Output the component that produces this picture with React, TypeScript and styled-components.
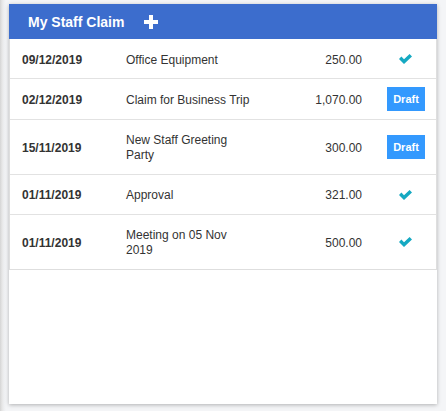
import React from "react";
import styled, { createGlobalStyle } from "styled-components";

const Global = createGlobalStyle`
  html, body { margin: 0; padding: 0; }
  body {
    width: 446px;
    height: 411px;
    overflow: hidden;
    font-family: "Liberation Sans", Arial, sans-serif;
    background: linear-gradient(to right, #d4d4d4 0px, #e6e6e6 2px, #eeeff1 4px, #f4f5f7 6px);
  }
`;

const Page = styled.div`
  padding: 4px 9px 7px 9px;
`;

const Card = styled.div`
  width: 428px;
  height: 400px;
  background: #fff;
  box-shadow: 0 1px 4px rgba(0, 0, 0, 0.28);
  display: flex;
  flex-direction: column;
`;

const Header = styled.div`
  height: 35px;
  flex-shrink: 0;
  background: #3c6dcd;
  display: flex;
  align-items: center;
  padding-left: 19px;
  gap: 20px;
`;

const Title = styled.span`
  color: #fff;
  font-weight: bold;
  font-size: 14px;
`;

const PlusIcon = styled.svg`
  display: block;
`;

const Table = styled.div`
  border: 1px solid #dedede;
  border-top: none;
`;

const Row = styled.div`
  display: grid;
  grid-template-columns: 104px 128px 1fr 60px;
  align-items: center;
  padding: 13.6px 0 11px 12px;
  border-bottom: 1px solid #e2e2e2;
  font-size: 12px;
  line-height: 14.7px;
  color: #333;
  &:last-child {
    border-bottom: none;
  }
`;

const DateCell = styled.div`
  font-weight: bold;
  color: #333;
`;

const DescCell = styled.div`
  padding-right: 2px;
`;

const AmountCell = styled.div`
  text-align: right;
  padding-right: 14px;
`;

const StatusCell = styled.div`
  display: flex;
  justify-content: center;
  align-items: center;
  height: 14px;
  margin-top: -2px;
`;

const DraftButton = styled.span`
  display: inline-flex;
  align-items: center;
  justify-content: center;
  width: 38px;
  height: 24px;
  background: #3399fe;
  color: #fff;
  font-weight: bold;
  font-size: 11px;
`;

const Check = () => (
  <svg width="14" height="10" viewBox="0 0 14 10">
    <path d="M0 5 L2.4 2.6 L5 5.2 L10.6 0 L13 2.4 L5 10 Z" fill="#15a9c2" />
  </svg>
);

type Claim = { date: string; desc: string; amount: string; draft: boolean };

const claims: Claim[] = [
  { date: "09/12/2019", desc: "Office Equipment", amount: "250.00", draft: false },
  { date: "02/12/2019", desc: "Claim for Business Trip", amount: "1,070.00", draft: true },
  { date: "15/11/2019", desc: "New Staff Greeting Party", amount: "300.00", draft: true },
  { date: "01/11/2019", desc: "Approval", amount: "321.00", draft: false },
  { date: "01/11/2019", desc: "Meeting on 05 Nov 2019", amount: "500.00", draft: false },
];

export default function App() {
  return (
    <>
      <Global />
      <Page>
        <Card>
          <Header>
            <Title>My Staff Claim</Title>
            <PlusIcon width="14" height="14" viewBox="0 0 14 14">
              <path d="M5 0 H9 V5 H14 V9 H9 V14 H5 V9 H0 V5 H5 Z" fill="#fff" />
            </PlusIcon>
          </Header>
          <Table>
            {claims.map((c, i) => (
              <Row key={i}>
                <DateCell>{c.date}</DateCell>
                <DescCell>{c.desc}</DescCell>
                <AmountCell>{c.amount}</AmountCell>
                <StatusCell>{c.draft ? <DraftButton>Draft</DraftButton> : <Check />}</StatusCell>
              </Row>
            ))}
          </Table>
        </Card>
      </Page>
    </>
  );
}
